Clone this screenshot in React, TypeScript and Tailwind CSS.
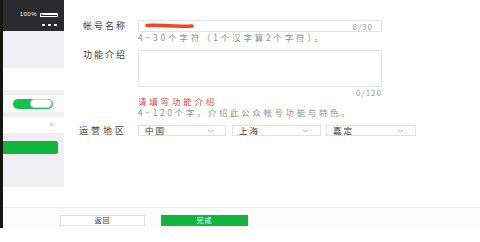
const cjk = { fontFamily: '"Noto Sans CJK SC", "Noto Sans", sans-serif' };

function Chevron() {
  return (
    <svg width="7" height="4" viewBox="0 0 7 4" className="shrink-0">
      <path d="M0.5 0.8 L3.5 2.8 L6.5 0.8" fill="none" stroke="#b5b5b5" strokeWidth="0.9" />
    </svg>
  );
}

function Select({ label, width }: { label: string; width: string }) {
  return (
    <div className={`${width} h-[11px] border border-[#e2e2e2] bg-white flex items-center justify-between pl-[6px] pr-[11px]`}>
      <span className="text-[8.5px] leading-[9px] tracking-[2px] text-[#3a3a3a]">{label}</span>
      <Chevron />
    </div>
  );
}

function PhonePreview() {
  return (
    <div className="w-[61px] flex flex-col shrink-0">
      <div className="h-[31px] bg-[#2b2a2c] flex flex-col items-end pr-[6px] pt-[11px]">
        <div className="flex items-center gap-[3px]">
          <span className="text-[6px] leading-[7px] text-white tracking-[0.5px]" style={{ fontFamily: '"Liberation Sans", sans-serif' }}>
            100%
          </span>
          <div className="w-[18px] h-[4px] border border-white p-[0.5px]">
            <div className="h-full bg-white" />
          </div>
        </div>
        <div className="flex gap-[3px] mt-[6px] mr-[1px]">
          <div className="w-[3px] h-[2px] bg-white" />
          <div className="w-[3px] h-[2px] bg-white" />
          <div className="w-[3px] h-[2px] bg-white" />
        </div>
      </div>
      <div className="h-[37px] bg-[#f0eff4]" />
      <div className="h-[22px] bg-white" />
      <div className="h-[5px] bg-[#f0eff4]" />
      <div className="h-[17px] bg-[#fbfbfc] flex items-center pl-[10px]">
        <div className="w-[40px] h-[10px] rounded-full bg-[#13c24a] flex items-center justify-end pr-[1px]">
          <div className="w-[22px] h-[9px] rounded-full bg-white border border-[#d5d5d5]" />
        </div>
      </div>
      <div className="h-[5px] bg-[#f0eff4]" />
      <div className="h-[16px] bg-white flex items-center justify-end pr-[10px]">
        <span className="text-[8px] leading-[8px] text-[#b8b8b8]" style={{ fontFamily: '"Liberation Sans", sans-serif' }}>
          &gt;
        </span>
      </div>
      <div className="h-[54px] bg-[#f0eff4] pt-[8px] pr-[6px]">
        <div className="h-[13px] bg-[#10b53d] rounded-r-[2px]" />
      </div>
      <div className="flex-1 bg-white" />
    </div>
  );
}

function Form() {
  return (
    <div className="flex-1 pt-[20px] text-[#3a3a3a]" style={cjk}>
      {/* 帐号名称 */}
      <div className="flex">
        <div className="w-[74px] pr-[11px] text-right text-[9px] leading-[12px] tracking-[2px] text-[#404040]">帐号名称</div>
        <div className="w-[244px]">
          <div className="h-[12px] border border-[#e4e4e4] bg-white flex items-center justify-between pl-[6px] pr-[8px]">
            <svg width="50" height="8" viewBox="0 0 50 8">
              <path d="M2 3.5 C 12 2, 25 5, 47 4" fill="none" stroke="#f5451f" strokeWidth="3.5" strokeLinecap="round" />
            </svg>
            <span className="text-[8px] leading-[9px] tracking-[1px] text-[#9a9a9a]">8/30</span>
          </div>
          <div className="text-[8.5px] leading-[10px] tracking-[2.8px] text-[#8f8f8f]">4~30个字符（1个汉字算2个字符）。</div>
        </div>
      </div>

      {/* 功能介绍 */}
      <div className="flex mt-[8px]">
        <div className="w-[74px] pr-[11px] text-right text-[9px] leading-[10px] tracking-[2px] text-[#404040]">功能介绍</div>
        <div className="w-[244px]">
          <div className="h-[37px] border border-[#e4e4e4] bg-white" />
          <div className="text-right text-[8px] leading-[9px] tracking-[1px] text-[#9a9a9a] mt-[1px]">0/120</div>
          <div className="text-[8.5px] leading-[9px] tracking-[2.8px] text-[#e5413b]">请填写功能介绍</div>
          <div className="text-[8.5px] leading-[11px] tracking-[2.6px] text-[#8f8f8f] mt-[1px]">4~120个字，介绍此公众帐号功能与特色。</div>
        </div>
      </div>

      {/* 运营地区 */}
      <div className="flex items-center mt-[7px]">
        <div className="w-[74px] pr-[11px] text-right text-[9px] leading-[11px] tracking-[3px] text-[#404040]">运营地区</div>
        <div className="flex">
          <Select label="中国" width="w-[88px]" />
          <div className="w-[6px]" />
          <Select label="上海" width="w-[89px]" />
          <div className="w-[5px]" />
          <Select label="嘉定" width="w-[90px]" />
        </div>
      </div>
    </div>
  );
}

export default function App() {
  return (
    <div className="w-[480px] h-[242px] bg-white overflow-hidden">
      <div className="h-[228px] border-l-[3px] border-[#161616] flex flex-col">
        <div className="h-[207px] flex">
          <PhonePreview />
          <Form />
        </div>
        <div className="flex-1 border-t border-[#ececec] bg-[#fcfcfc] flex gap-[16px] pl-[57px] pt-[7px]" style={cjk}>
          <button className="w-[85px] h-[11px] border border-[#e0e0e0] bg-white flex items-center justify-center text-[7px] leading-[7px] tracking-[1px] text-[#333]">
            返回
          </button>
          <button className="w-[87px] h-[11px] bg-[#12b53e] flex items-center justify-center text-[7px] leading-[7px] tracking-[1px] text-white">
            完成
          </button>
        </div>
      </div>
    </div>
  );
}
